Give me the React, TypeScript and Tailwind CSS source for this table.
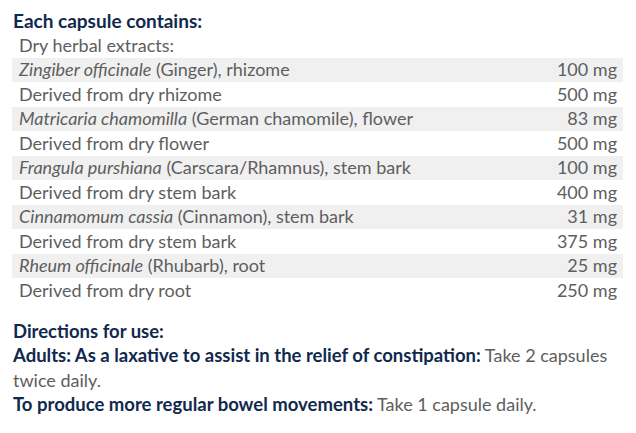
import React from 'react';

type Row = { latin?: string; text: string; amount?: string };

const rows: Row[] = [
  { text: 'Dry herbal extracts:' },
  { latin: 'Zingiber officinale', text: ' (Ginger), rhizome', amount: '100 mg' },
  { text: 'Derived from dry rhizome', amount: '500 mg' },
  { latin: 'Matricaria chamomilla', text: ' (German chamomile), flower', amount: '83 mg' },
  { text: 'Derived from dry flower', amount: '500 mg' },
  { latin: 'Frangula purshiana', text: ' (Carscara/Rhamnus), stem bark', amount: '100 mg' },
  { text: 'Derived from dry stem bark', amount: '400 mg' },
  { latin: 'Cinnamomum cassia', text: ' (Cinnamon), stem bark', amount: '31 mg' },
  { text: 'Derived from dry stem bark', amount: '375 mg' },
  { latin: 'Rheum officinale', text: ' (Rhubarb), root', amount: '25 mg' },
  { text: 'Derived from dry root', amount: '250 mg' },
];

const App = () => {
  return (
    <div
      className="w-[636px] h-[433px] bg-white px-3 pt-2 text-[#5e5e5e]"
      style={{ fontFamily: 'Lato, "Liberation Sans", sans-serif' }}
    >
      <h2 className="text-[19px] leading-[25px] font-bold text-[#10294d] pl-px">Each capsule contains:</h2>

      {/* Ingredients table */}
      <div className="w-[611px] text-[18px] font-normal">
        {rows.map((row, i) => (
          <div
            key={i}
            className={`flex justify-between items-center h-[24.5px] pl-[7px] pr-[6px] ${i % 2 === 1 ? 'bg-[#f0f0f0]' : ''}`}
          >
            <span>
              {row.latin && <i>{row.latin}</i>}
              {row.text}
            </span>
            {row.amount && <span>{row.amount}</span>}
          </div>
        ))}
      </div>

      {/* Directions */}
      <div className="mt-4 pl-px text-[18px] leading-[24.5px] font-normal">
        <p className="font-bold text-[18.5px] text-[#10294d]">Directions for use:</p>
        <p className="whitespace-nowrap">
          <b className="font-bold text-[18.5px] text-[#10294d]">Adults: As a laxative to assist in the relief of constipation:</b> Take 2 capsules
          <br />
          twice daily.
        </p>
        <p>
          <b className="font-bold text-[18.5px] text-[#10294d]">To produce more regular bowel movements:</b> Take 1 capsule daily.
        </p>
      </div>
    </div>
  );
};

export default App;
